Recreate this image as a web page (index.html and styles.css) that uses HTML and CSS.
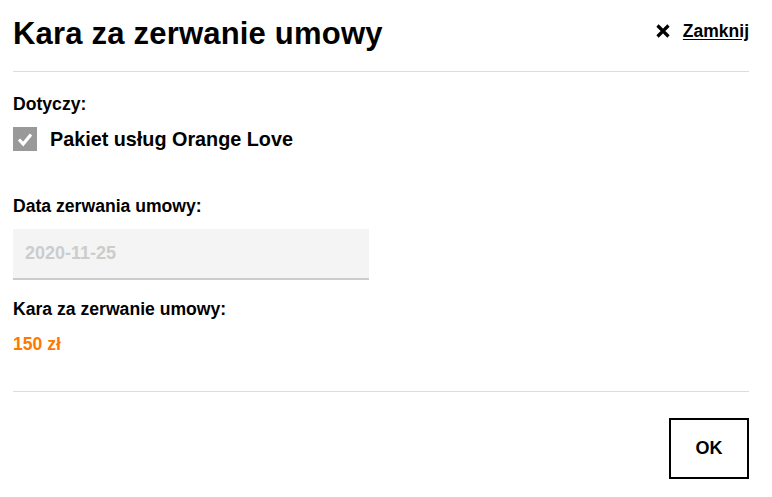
FILE: index.html
```html
<!DOCTYPE html>
<html lang="pl">
<head>
<meta charset="utf-8">
<title>Kara za zerwanie umowy</title>
<link rel="stylesheet" href="styles.css">
</head>
<body>
<div class="modal">
  <header class="modal-header">
    <h1 class="modal-title">Kara za zerwanie umowy</h1>
    <a class="close" href="#">
      <svg class="close-icon" width="14" height="14" viewBox="0 0 14 14" aria-hidden="true">
        <path d="M1.5 1.5 L12.5 12.5 M12.5 1.5 L1.5 12.5" stroke="#000" stroke-width="3.2" stroke-linecap="butt" fill="none"/>
      </svg>
      <span class="close-text">Zamknij</span>
    </a>
  </header>
  <section class="modal-body">
    <div class="label">Dotyczy:</div>
    <div class="check-row">
      <span class="checkbox">
        <svg width="24" height="24" viewBox="0 0 24 24" aria-hidden="true">
          <path d="M6 12.5 L10.2 17 L18 7.5" stroke="#fff" stroke-width="3.2" fill="none" stroke-linecap="butt" stroke-linejoin="miter"/>
        </svg>
      </span>
      <span class="check-text">Pakiet usług Orange Love</span>
    </div>
    <div class="label label-date">Data zerwania umowy:</div>
    <div class="input">2020-11-25</div>
    <div class="label label-fee">Kara za zerwanie umowy:</div>
    <div class="fee">150 zł</div>
  </section>
  <footer class="modal-footer">
    <button class="ok">OK</button>
  </footer>
</div>
</body>
</html>
```

FILE: styles.css
```css
* { box-sizing: border-box; }
html, body { margin: 0; padding: 0; background: #fff; }
body {
  font-family: "Liberation Sans", Arial, sans-serif;
  font-weight: bold;
  color: #000;
}
.modal {
  width: 736px;
  margin-left: 13px;
}
.modal-header {
  display: flex;
  justify-content: space-between;
  align-items: flex-start;
  padding-top: 16px;
  padding-bottom: 19px;
  border-bottom: 1px solid #ddd;
}
.modal-title {
  margin: 0;
  font-size: 31px;
  line-height: 36px;
  letter-spacing: 0.2px;
  font-weight: bold;
}
.close {
  display: flex;
  align-items: center;
  gap: 13px;
  margin-top: 5px;
  color: #000;
  text-decoration: none;
}
.close-icon { display: block; }
.close-text {
  font-size: 17.5px;
  line-height: 20px;
  text-decoration: underline;
  text-underline-offset: 2px;
}
.modal-body {
  padding-top: 22px;
  padding-bottom: 37px;
  border-bottom: 1px solid #ddd;
}
.label {
  font-size: 17.6px;
  line-height: 20px;
}
.check-row {
  display: flex;
  align-items: center;
  gap: 13px;
  margin-top: 13px;
}
.checkbox {
  display: block;
  width: 24px;
  height: 24px;
  background: #999;
}
.checkbox svg { display: block; }
.check-text {
  font-size: 19.8px;
  line-height: 24px;
}
.label-date { margin-top: 45px; }
.input {
  margin-top: 13px;
  width: 356px;
  height: 51px;
  padding-left: 12px;
  display: flex;
  align-items: center;
  background: #f4f4f4;
  border-bottom: 2px solid #ccc;
  color: #ccc;
  font-size: 18px;
}
.label-fee { margin-top: 19px; }
.fee {
  margin-top: 15px;
  font-size: 17.6px;
  line-height: 20px;
  color: #ff7900;
}
.modal-footer {
  display: flex;
  justify-content: flex-end;
  padding-top: 26px;
}
.ok {
  width: 80px;
  height: 61px;
  background: #fff;
  border: 2px solid #000;
  font-family: "Liberation Sans", Arial, sans-serif;
  font-weight: bold;
  font-size: 18px;
  color: #000;
  padding: 0;
}
```
